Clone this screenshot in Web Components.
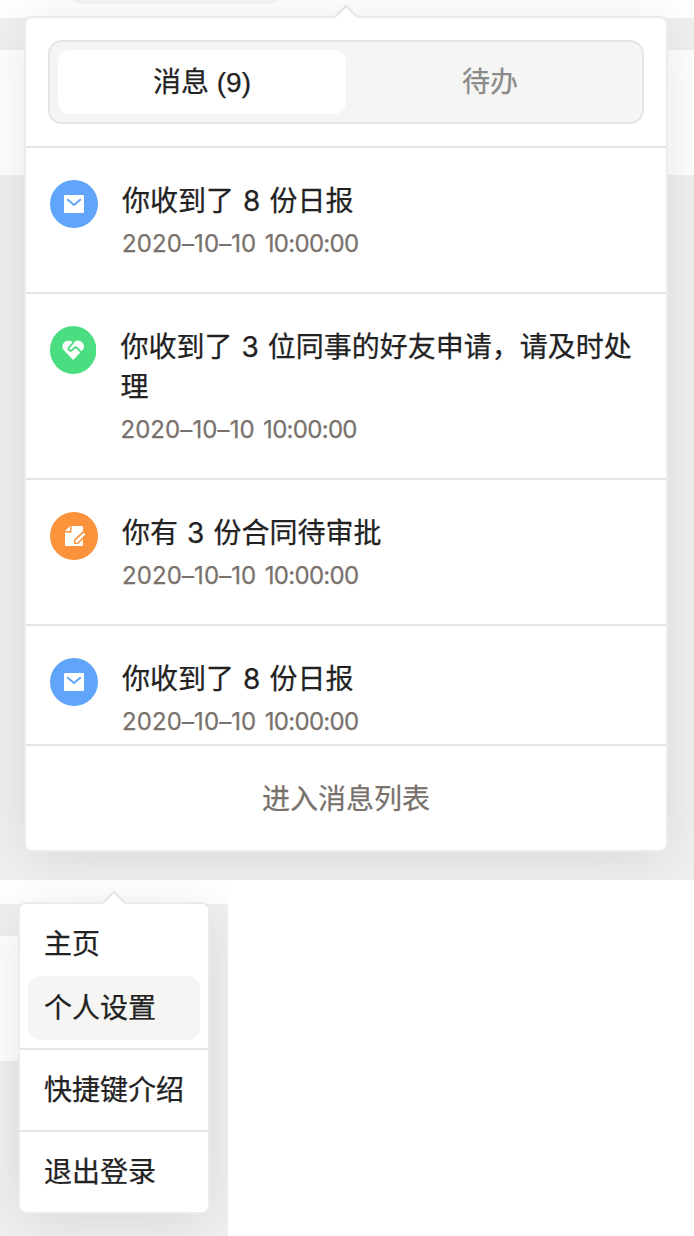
<!DOCTYPE html>
<html lang="zh-CN">
<head>
<meta charset="UTF-8">
<title>消息</title>
<style>
  body {
    margin: 0;
    background: #fff;
    color: #222;
    font-family: "Liberation Sans", "Noto Sans CJK SC", sans-serif;
    font-size: 28px;
    line-height: 40px;
    -webkit-text-stroke: .25px;
  }
</style>
</head>
<body>
  <app-stage class="messages" style="--width: 694px; --height: 880px; --bar-top: 18px; --bar-bottom: 50px; --bar-end: 175px; --pale-width: 694px; --pad: 16px 0 0 24px">
    <pop-over style="--width: 640px; --arrow: 308px">
      <tab-switch active="消息 (9)" other="待办"></tab-switch>
      <message-list>
        <message-item icon="mail" date="2020–10–10" time="10:00:00">你收到了 8 份日报</message-item>
        <message-item icon="friend" date="2020–10–10" time="10:00:00">你收到了 3 位同事的好友申请，请及时处理</message-item>
        <message-item icon="contract" date="2020–10–10" time="10:00:00">你有 3 份合同待审批</message-item>
        <message-item icon="mail" date="2020–10–10" time="10:00:00">你收到了 8 份日报</message-item>
      </message-list>
      <panel-footer>进入消息列表</panel-footer>
    </pop-over>
  </app-stage>

  <app-stage style="--width: 228px; --height: 356px; --bar-top: 24px; --bar-bottom: 56px; --bar-end: 181px; --pale-width: 40px; --pad: 22px 0 0 18px">
    <pop-over style="--width: 188px; --arrow: 82px">
      <menu-group>
        <menu-item>主页</menu-item>
        <menu-item selected>个人设置</menu-item>
      </menu-group>
      <menu-group><menu-item>快捷键介绍</menu-item></menu-group>
      <menu-group><menu-item>退出登录</menu-item></menu-group>
    </pop-over>
  </app-stage>

<script>
  const icons = {
    mail: {
      color: '#60a5fa',
      shape: `<rect x="14" y="15" width="20" height="18" rx="1" fill="#fff"/>
        <path d="M17.2 19.2 24 25l6.8-5.8" fill="none" stroke="#60a5fa" stroke-width="1.9"/>`
    },
    friend: {
      color: '#4ade80',
      shape: `<path d="M24 34 14.6 24.6C12.2 22 12.2 18.8 14.4 16.7c2.6-2.5 6.8-2.5 9.6 0 2.8-2.5 7-2.5 9.6 0 2.2 2.1 2.2 5.3-.2 7.9Z" fill="#fff"/>
        <path d="m24.6 16.2-4.4 4.6q-1.9 2.1-.3 3.4 1.5 1.2 3.3-.5l2.3-2.2h1.9l4.9 4.9" fill="none" stroke="#4ade80" stroke-width="1.9"/>`
    },
    contract: {
      color: '#fb923c',
      shape: `<path d="M21.5 14H32q1 0 1 1v18q0 1-1 1H16q-1 0-1-1V20.5h6.5Z" fill="#fff"/>
        <path d="M15 19 20 14v5Z" fill="#fff"/>
        <path d="M24 32v-4.2L33.4 18.4l4.2 4.2L28.2 32Z" fill="#fb923c"/>
        <path d="m25.8 30.2 8.6-8.6" stroke="#fff" stroke-width="2.7" fill="none"/>`
    }
  }

  // The page behind a popover: white header, grey bar, pale block, grey body
  class AppStage extends HTMLElement {
    constructor() {
      super()
      this.attachShadow({ mode: 'open' })
    }

    connectedCallback() {
      const search = this.classList.contains('messages')
      this.shadowRoot.innerHTML = `
        <style>
          :host {
            display: grid;
            box-sizing: border-box;
            align-items: start;
            justify-content: start;
            overflow: hidden;
            width: var(--width);
            height: var(--height);
            background:
              linear-gradient(transparent var(--bar-bottom), #fff var(--bar-bottom) var(--bar-end), transparent var(--bar-end)) 0 0 / var(--pale-width) 100% no-repeat,
              linear-gradient(#fff var(--bar-top), #f0f0f0 var(--bar-top));
          }
          .search, .content { grid-area: 1 / 1; }
          .search {
            width: 204px;
            height: 4px;
            margin-left: 73px;
            background: #f4f4f2;
            border-radius: 0 0 10px 10px / 0 0 4px 4px;
          }
          .content { padding: var(--pad); }
        </style>
        ${search ? '<div class="search"></div>' : ''}
        <div class="content"><slot></slot></div>
      `
    }
  }

  class PopOver extends HTMLElement {
    constructor() {
      super()
      this.attachShadow({ mode: 'open' })
      this.shadowRoot.innerHTML = `
        <style>
          :host {
            display: block;
            position: relative;
            width: var(--width);
            border: 2px solid #ebebeb;
            border-radius: 8px;
            background: #fff;
            box-shadow: 0 8px 56px rgba(0, 0, 0, .1);
          }
          svg {
            position: absolute;
            top: -14px;
            left: var(--arrow);
            display: block;
          }
        </style>
        <svg width="24" height="14" viewBox="0 0 24 14">
          <path d="M0 14 12 2l12 12Z" fill="#fff"/>
          <path d="M.6 13.2 12 2l11.4 11.2" fill="none" stroke="#e7e7e7" stroke-width="2.4"/>
        </svg>
        <slot></slot>
      `
    }
  }

  class TabSwitch extends HTMLElement {
    constructor() {
      super()
      this.attachShadow({ mode: 'open' })
    }

    connectedCallback() {
      this.shadowRoot.innerHTML = `
        <style>
          :host {
            display: block;
            padding: 22px;
            border-bottom: 2px solid #e5e5e5;
          }
          .tabs {
            display: grid;
            grid-template-columns: 1fr 1fr;
            padding: 8px;
            border: 2px solid #e5e5e4;
            border-radius: 14px;
            background: #f5f5f4;
          }
          .tab {
            padding-top: 1px;
            border-radius: 12px;
            color: #8b8b89;
            line-height: 63px;
            text-align: center;
          }
          .active { background: #fff; color: #222; }
        </style>
        <div class="tabs">
          <div class="tab active">${this.getAttribute('active')}</div>
          <div class="tab">${this.getAttribute('other')}</div>
        </div>
      `
    }
  }

  class MessageList extends HTMLElement {
    constructor() {
      super()
      this.attachShadow({ mode: 'open' })
      this.shadowRoot.innerHTML = `
        <style>
          :host { display: block; height: 596px; overflow: hidden; }
        </style>
        <slot></slot>
      `
    }
  }

  class MessageItem extends HTMLElement {
    constructor() {
      super()
      this.attachShadow({ mode: 'open' })
    }

    connectedCallback() {
      const icon = icons[this.getAttribute('icon')]
      const width = this.getAttribute('icon') === 'friend' ? 46.4 : 48

      this.shadowRoot.innerHTML = `
        <style>
          :host {
            display: flex;
            gap: 24px;
            padding: 32px 24px;
            border-bottom: 2px solid #e5e5e5;
          }
          .icon { flex: none; display: block; }
          .text { margin: 1px 0 -1px; }
          .title {
            color: #222;
            font-family: Inter, "Noto Sans CJK SC", sans-serif;
            word-spacing: 1.2px;
          }
          .date {
            padding-top: 6px;
            color: #78716c;
            font-family: Inter, sans-serif;
            font-size: 24px;
            line-height: 34px;
            letter-spacing: .1px;
            white-space: nowrap;
            word-spacing: 1.5px;
          }
          .time { letter-spacing: -.7px; }
        </style>
        <svg class="icon" width="${width}" height="48" viewBox="0 0 48 48" preserveAspectRatio="none">
          <circle cx="24" cy="24" r="24" fill="${icon.color}"/>
          ${icon.shape}
        </svg>
        <div class="text">
          <div class="title"><slot></slot></div>
          <div class="date">${this.getAttribute('date')} <span class="time">${this.getAttribute('time')}</span></div>
        </div>
      `
    }
  }

  class PanelFooter extends HTMLElement {
    constructor() {
      super()
      this.attachShadow({ mode: 'open' })
      this.shadowRoot.innerHTML = `
        <style>
          :host {
            display: block;
            padding-top: 3px;
            border-top: 2px solid #e5e5e5;
            color: #78716c;
            line-height: 101px;
            text-align: center;
          }
        </style>
        <slot></slot>
      `
    }
  }

  class MenuGroup extends HTMLElement {
    constructor() {
      super()
      this.attachShadow({ mode: 'open' })
      this.shadowRoot.innerHTML = `
        <style>
          :host { display: block; padding: 8px; }
          :host(:not(:first-child)) { border-top: 2px solid #e5e5e5; }
        </style>
        <slot></slot>
      `
    }
  }

  class MenuItem extends HTMLElement {
    constructor() {
      super()
      this.attachShadow({ mode: 'open' })
      this.shadowRoot.innerHTML = `
        <style>
          :host {
            display: block;
            padding: 2px 0 0 16px;
            border-radius: 12px;
            line-height: 62px;
            white-space: nowrap;
          }
          :host([selected]) { background: #f5f5f4; }
        </style>
        <slot></slot>
      `
    }
  }

  customElements.define('app-stage', AppStage)
  customElements.define('pop-over', PopOver)
  customElements.define('tab-switch', TabSwitch)
  customElements.define('message-list', MessageList)
  customElements.define('message-item', MessageItem)
  customElements.define('panel-footer', PanelFooter)
  customElements.define('menu-group', MenuGroup)
  customElements.define('menu-item', MenuItem)
</script>
</body>
</html>
